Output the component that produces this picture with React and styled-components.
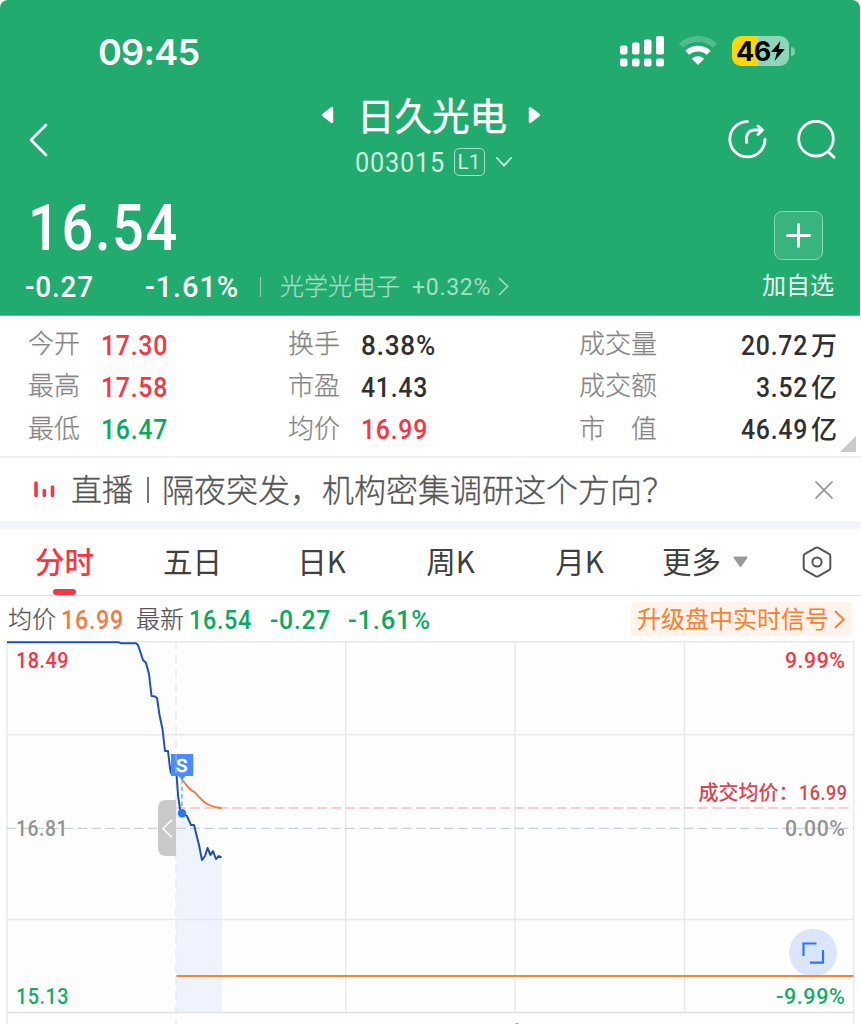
import styled, { createGlobalStyle } from "styled-components";

const stats = [
  [
    { label: "今开", value: "17.30", w: 67, color: "#fa3440" },
    { label: "最高", value: "17.58", w: 67, color: "#fa3440" },
    { label: "最低", value: "16.47", w: 67, color: "#07ab5f" },
  ],
  [
    { label: "换手", value: "8.38%", w: 75, color: "#303030" },
    { label: "市盈", value: "41.43", w: 67, color: "#303030" },
    { label: "均价", value: "16.99", w: 67, color: "#fa3440" },
  ],
  [
    { label: "成交量", value: "20.72", w: 67, unit: "万" },
    { label: "成交额", value: "3.52", w: 52, unit: "亿" },
    { label: "市　值", value: "46.49", w: 67, unit: "亿" },
  ],
];

// digits drawn in a narrow face: text is stretched to the given width
function Num({ children, w, size, color = "#fff", weight = 500 }) {
  const h = Math.round(size * 1.2);
  return (
    <NumSvg width={w} height={h}>
      <text
        x="0"
        y={Math.round(h / 2 + size * 0.356)}
        fontSize={size}
        fontWeight={weight}
        fill={color}
        letterSpacing={size * 0.03}
        textLength={w}
        lengthAdjust="spacingAndGlyphs"
      >
        {children}
      </text>
    </NumSvg>
  );
}

function StatusBar() {
  return (
    <SStatusBar>
      <Clock>09:45</Clock>
      <StatusIcons>
        <svg width="44" height="31" viewBox="0 0 44 31" fill="#fff">
          <rect x="0" y="9.5" width="7.5" height="9" rx="2" />
          <rect x="12" y="6.5" width="7.5" height="12" rx="2" />
          <rect x="24" y="3.5" width="7.5" height="15" rx="2" />
          <rect x="36" y="0" width="8" height="18.5" rx="2" />
          <rect x="0" y="22.5" width="7.5" height="8" rx="2" />
          <rect x="12" y="22.5" width="7.5" height="8" rx="2" />
          <rect x="24" y="22.5" width="7.5" height="8" rx="2" />
          <rect x="36" y="22.5" width="8" height="8" rx="2" />
        </svg>
        <svg width="40" height="30" viewBox="0 0 40 30">
          <path d="M3 9.6 A25 25 0 0 1 37 9.6" fill="none" stroke="#fff" strokeOpacity=".22" strokeWidth="6" />
          <path d="M9.2 16.8 A16 16 0 0 1 30.8 16.8" fill="none" stroke="#fff" strokeWidth="5.6" />
          <path d="M20 29 L13.8 22.8 A9 9 0 0 1 26.2 22.8 Z" fill="#fff" />
        </svg>
        <Battery>
          <BatteryText>46</BatteryText>
          <svg width="14" height="20" viewBox="0 0 14 20">
            <path d="M9.5 0 L0 11 H6 L3.6 20 L13.8 8 H7.6 Z" fill="#000" />
          </svg>
          <BatteryTip />
        </Battery>
      </StatusIcons>
    </SStatusBar>
  );
}

function Header() {
  return (
    <SHeader>
      <StatusBar />
      <NavRow>
        <svg width="20" height="34" viewBox="0 0 20 34">
          <path d="M17 2 L2 17 L17 32" fill="none" stroke="#fff" strokeWidth="2.8" strokeLinecap="round" strokeLinejoin="round" />
        </svg>
        <TitleBlock>
          <TitleLine>
            <svg width="13" height="18" viewBox="0 0 13 18">
              <path d="M11 2 V16 L2 9 Z" fill="#fff" stroke="#fff" strokeWidth="2.4" strokeLinejoin="round" />
            </svg>
            <Title>日久光电</Title>
            <svg width="13" height="18" viewBox="0 0 13 18">
              <path d="M2 2 V16 L11 9 Z" fill="#fff" stroke="#fff" strokeWidth="2.4" strokeLinejoin="round" />
            </svg>
          </TitleLine>
          <CodeLine>
            <Num w={90} size={28} weight={400} color="#d0eedf">003015</Num>
            <Level>L1</Level>
            <svg width="16" height="10" viewBox="0 0 16 10">
              <path d="M1 1 L8 8.6 L15 1" fill="none" stroke="#d0eedf" strokeWidth="1.8" strokeLinecap="round" strokeLinejoin="round" />
            </svg>
          </CodeLine>
        </TitleBlock>
        <NavIcons>
          <svg width="39" height="39" viewBox="0 0 39 39" fill="none" stroke="#fff" strokeWidth="2.8" strokeLinecap="round" strokeLinejoin="round">
            <path d="M19.5 1.7 A17.6 17.6 0 1 0 37 19.2" />
            <path d="M18.5 22.5 V19 Q18.5 10 27 10 H34 M30 6 L34.5 10 L30 14.5" />
          </svg>
          <svg width="39" height="39" viewBox="0 0 39 39" fill="none" stroke="#fff" strokeWidth="2.8" strokeLinecap="round">
            <circle cx="19" cy="18.7" r="17.3" />
            <path d="M31 31.5 L37 37.3" />
          </svg>
        </NavIcons>
      </NavRow>
      <PriceArea>
        <div>
          <BigPrice>
            <Num w={151} size={65}>16.54</Num>
          </BigPrice>
          <ChangeLine>
            <Num w={69} size={29}>-0.27</Num>
            <Num w={94} size={29}>-1.61%</Num>
            <Divider />
            <Sector>光学光电子</Sector>
            <Num w={79} size={24} weight={400} color="#a5ddc4">+0.32%</Num>
            <svg width="11" height="19" viewBox="0 0 11 19">
              <path d="M1 1 L9.6 9.5 L1 18" fill="none" stroke="#a5ddc4" strokeWidth="1.6" />
            </svg>
          </ChangeLine>
        </div>
        <Watch>
          <WatchBox>
            <svg width="25" height="25" viewBox="0 0 25 25">
              <path d="M12.5 1.5 V23.5 M1.5 12.5 H23.5" stroke="#fff" strokeWidth="2.8" strokeLinecap="round" />
            </svg>
          </WatchBox>
          加自选
        </Watch>
      </PriceArea>
    </SHeader>
  );
}

function Stats() {
  return (
    <SStats>
      {stats.map((column, i) => (
        <StatColumn key={i}>
          {column.map((item) => (
            <Stat key={item.label}>
              <StatLabel>{item.label}</StatLabel>
              <StatValue>
                <Num w={item.w} size={28} color={item.color || "#303030"}>{item.value}</Num>
                {item.unit && <Unit>{item.unit}</Unit>}
              </StatValue>
            </Stat>
          ))}
        </StatColumn>
      ))}
      <Corner />
    </SStats>
  );
}

function News() {
  return (
    <SNews>
      <svg width="21" height="17" viewBox="0 0 21 17" stroke="#fa3440" strokeWidth="3.6" strokeLinecap="round">
        <path d="M2 2 V14.5 M10.3 9.5 V14.5 M18.5 6 V14.5" />
      </svg>
      <Headline>
        <Tag>直播</Tag>
        <Bar />
        <span>隔夜突发，机构密集调研这个方向？</span>
      </Headline>
      <svg width="18" height="18" viewBox="0 0 18 18">
        <path d="M0.5 0.5 L17.5 17.5 M17.5 0.5 L0.5 17.5" stroke="#999" strokeWidth="1.8" />
      </svg>
    </SNews>
  );
}

function Tabs() {
  return (
    <STabs>
      <Tab $active>分时</Tab>
      <Tab>五日</Tab>
      <Tab>日K</Tab>
      <Tab>周K</Tab>
      <Tab>月K</Tab>
      <More>
        <MoreText>更多</MoreText>
        <svg width="15" height="12" viewBox="0 0 15 12">
          <path d="M1.5 1.5 H13.5 L7.5 10 Z" fill="#999" stroke="#999" strokeWidth="2" strokeLinejoin="round" />
        </svg>
      </More>
      <svg width="30" height="32" viewBox="0 0 30 32" fill="none" stroke="#555" strokeWidth="2">
        <path d="M13.5 1.8 Q15 1 16.5 1.8 L27 7.8 Q28.3 8.6 28.3 10.2 V21.8 Q28.3 23.4 27 24.2 L16.5 30.2 Q15 31 13.5 30.2 L3 24.2 Q1.7 23.4 1.7 21.8 V10.2 Q1.7 8.6 3 7.8 Z" />
        <circle cx="15" cy="16" r="4.6" />
      </svg>
    </STabs>
  );
}

function Legend() {
  return (
    <SLegend>
      <LegendText>均价</LegendText>
      <Num w={63} size={26} color="#f17c48">16.99</Num>
      <LegendText $left={12}>最新</LegendText>
      <Num w={63} size={26} color="#07ab5f">16.54</Num>
      <Gap $w={18} />
      <Num w={61} size={26} color="#07ab5f">-0.27</Num>
      <Gap $w={17} />
      <Num w={83} size={26} color="#07ab5f">-1.61%</Num>
      <Signal>
        <SignalText>升级盘中实时信号</SignalText>
        <svg width="11" height="19" viewBox="0 0 11 19">
          <path d="M1 1 L9.8 9.5 L1 18" fill="none" stroke="#fc7f2b" strokeWidth="2" />
        </svg>
      </Signal>
    </SLegend>
  );
}

const pricePoints =
  "176.5,774 178,795 180,809 182,813 187,816 191,825 194,825 199,845 202,860 205,856 207.5,848 210.5,855 213,851 216,859 219,856 221.5,857.5";

function Chart() {
  return (
    <SChart width="861" height="383" viewBox="0 641 861 383">
      <rect x="7" y="642" width="847" height="382" fill="#fdfdfd" />
      <polygon points={`176,1012 ${pricePoints} 222,858 222,1012`} fill="#eef3fe" />

      <g stroke="#e7e8e8" strokeWidth="1.4" fill="none">
        <path d="M7 641.8 H854 M7 734.7 H854 M7 919.5 H854" />
        <path d="M7 641 V1024 M345.7 641 V1012 M515 641 V1012 M684.5 641 V1012 M853.7 641 V1024" />
        <path d="M7 1012.5 H854" stroke="#dfe0e0" />
        <path d="M176 641 V1024" strokeDasharray="9 5" />
      </g>
      <path d="M7 828.4 H854" stroke="#c2d2de" strokeWidth="1.4" strokeDasharray="9.5 4.6" />
      <path d="M176 808 H852" stroke="#f9cdd2" strokeWidth="1.8" strokeDasharray="10 4.1" />
      <path d="M176.5 976 H853.5" stroke="#fb8434" strokeWidth="2" />

      <path d="M176 800 H166 Q158 800 158 809 V847 Q158 856 166 856 H176 Z" fill="#c9c9c9" />
      <path d="M172 820 L163 828.5 L172 837.5" fill="none" stroke="#fff" strokeWidth="1.6" />

      <polyline
        points="182.5,780 187,786 191,790 195,792.5 199,797 203,801 207,804 212,806 217,807.5 221.5,808"
        fill="none"
        stroke="#fb7437"
        strokeWidth="1.8"
      />
      <polyline
        points={`7,642.3 119,642.3 121,643.3 136,643.3 138,645 143,660 146,663 149,674 151.5,696 155,696.5 157,698 159.5,715 162.5,729 165,751 168,751 170,768 171,773 ${pricePoints}`}
        fill="none"
        stroke="#1c52b8"
        strokeWidth="2"
        strokeLinejoin="round"
      />

      <path d="M182 779 V810" stroke="#7fb0ff" strokeWidth="1.6" strokeDasharray="4.5 3" />
      <path d="M171 754 H193.3 V776 H185.5 L182 780 L178.5 776 H171 Z" fill="#4a8bff" />
      <path d="M176 754 V776" stroke="#86aff8" strokeWidth="1.4" strokeDasharray="7 5" />
      <ChartText x="176" y="772" fontSize="19" stroke="#fff" strokeWidth="0.4" fill="#fff">S</ChartText>
      <circle cx="182" cy="813.3" r="4.2" fill="#1f78ff" />

      <ChartText x="16" y="668" textLength="53" fill="#fa3440">18.49</ChartText>
      <ChartText x="16" y="836" textLength="52" fill="#949494">16.81</ChartText>
      <ChartText x="16" y="1003.5" textLength="53" fill="#12ad66">15.13</ChartText>
      <ChartText x="785" y="668" textLength="60.5" fill="#fa3440">9.99%</ChartText>
      <ChartText x="785" y="836" textLength="60.5" fill="#949494">0.00%</ChartText>
      <ChartText x="776" y="1003.5" textLength="69.5" fill="#12ad66">-9.99%</ChartText>
      <AvgLabel x="698.5" y="800">成交均价：</AvgLabel>
      <ChartText x="799" y="800" textLength="48.5" fontSize="20.5" fill="#dc4450">16.99</ChartText>

      <circle cx="813" cy="952.7" r="24" fill="#dbe6fd" />
      <path d="M789.5 976 H836.5" stroke="#fb8434" strokeWidth="2" />
      <path d="M803.5 956 V943.5 H816.5 M810 962.7 H823 V950" fill="none" stroke="#2878ff" strokeWidth="2.2" />
      <rect x="515.5" y="1023" width="3" height="1" fill="#aaa" />
    </SChart>
  );
}

function App() {
  return (
    <Page>
      <GlobalStyle />
      <Header />
      <Stats />
      <News />
      <Tabs />
      <Legend />
      <Chart />
    </Page>
  );
}

const GlobalStyle = createGlobalStyle`
  * {
    box-sizing: border-box;
  }

  body {
    margin: 0;
    background: #fff;
    overflow: hidden;
    font-family: "Noto Sans CJK SC", sans-serif;
  }

  svg {
    display: block;
    flex-shrink: 0;
  }
`;

const Page = styled.main`
  width: 861px;
  height: 1024px;
  overflow: hidden;
`;

const NumSvg = styled.svg`
  font-family: Roboto, sans-serif;
  overflow: visible;
`;

const SHeader = styled.header`
  height: 316px;
  margin-right: 1px;
  border-radius: 8px 8px 0 0;
  background: #21ab6f;
  border-bottom: 1px solid #5cc195;
  color: #fff;
`;

const SStatusBar = styled.div`
  display: flex;
  justify-content: space-between;
  align-items: center;
  height: 90px;
  padding: 12px 65px 0 98px;
`;

const Clock = styled.span`
  padding-top: 2px;
  font-family: Inter, sans-serif;
  font-size: 36px;
  font-weight: 600;
  letter-spacing: -0.7px;
`;

const StatusIcons = styled.div`
  display: flex;
  align-items: center;
  gap: 14px;
`;

const Battery = styled.div`
  position: relative;
  display: flex;
  align-items: center;
  width: 57px;
  height: 30px;
  margin: 0 6px 0 0;
  padding-left: 4px;
  border-radius: 9px;
  background: linear-gradient(90deg, #ffd60a 26px, #90d5b7 26px);
`;

const BatteryText = styled.span`
  font-family: Inter, sans-serif;
  font-size: 27px;
  font-weight: 700;
  letter-spacing: -0.5px;
  color: #000;
`;

const BatteryTip = styled.i`
  position: absolute;
  right: -6px;
  top: 11px;
  width: 4px;
  height: 9px;
  border-radius: 0 4px 4px 0;
  background: #79cca8;
`;

const NavRow = styled.div`
  display: flex;
  justify-content: space-between;
  align-items: center;
  height: 98px;
  padding: 1px 24px 0 29px;
`;

const TitleBlock = styled.div`
  width: 230px;
  margin-left: 88px;
  padding-bottom: 5px;
`;

const TitleLine = styled.div`
  display: flex;
  align-items: center;
  justify-content: center;
  height: 50px;
  padding-right: 3px;
  gap: 21px;
`;

const Title = styled.h1`
  margin: 0;
  padding: 0 0 2px 2px;
  font-size: 37.5px;
  font-weight: 400;
  line-height: 48px;
  -webkit-text-stroke: 0.5px #fff;
`;

const CodeLine = styled.div`
  display: flex;
  align-items: center;
  height: 44px;
  padding-left: 37px;
`;

const Level = styled.span`
  width: 31px;
  height: 28px;
  margin: 0 11px 0 9px;
  border: 1.5px solid #a8dec6;
  border-radius: 5px;
  font-family: Roboto, sans-serif;
  font-size: 21px;
  line-height: 26px;
  text-align: center;
  color: #d0eedf;
`;

const NavIcons = styled.div`
  display: flex;
  gap: 30px;
`;

const PriceArea = styled.div`
  display: flex;
  justify-content: space-between;
  height: 127px;
  padding: 0 26px 0 25px;
`;

const BigPrice = styled.div`
  height: 79px;
  padding: 0 0 0 3px;
`;

const ChangeLine = styled.div`
  display: flex;
  align-items: center;
  height: 39px;

  svg:nth-child(2) {
    margin-left: 51px;
  }
`;

const Divider = styled.i`
  width: 1px;
  height: 20px;
  margin: 0 19px 0 21px;
  background: #8ed2b3;
`;

const Sector = styled.span`
  margin-right: 12px;
  padding-bottom: 4px;
  font-size: 24px;
  font-weight: 300;
  color: #a5ddc4;
  -webkit-text-stroke: 0.25px #a5ddc4;

  & + svg + svg {
    margin-left: 7px;
  }
`;

const Watch = styled.div`
  display: flex;
  flex-direction: column;
  align-items: center;
  padding-top: 23px;
  font-size: 24px;
  line-height: 47px;
  color: #eefaf4;
`;

const WatchBox = styled.div`
  display: flex;
  align-items: center;
  justify-content: center;
  width: 49px;
  height: 49px;
  border: 1px solid #8fd3b5;
  border-radius: 8px;
  background: #38b47e;
`;

const SStats = styled.section`
  position: relative;
  display: grid;
  grid-template-columns: 260px 291px 258px;
  height: 142px;
  padding: 5px 0 0 28px;
  border-bottom: 2px solid #f1f1f1;
`;

const StatColumn = styled.div`
  display: flex;
  flex-direction: column;
`;

const Stat = styled.div`
  display: flex;
  align-items: center;
  height: 42.3px;
  gap: 21px;

  ${StatColumn}:nth-child(3) & {
    justify-content: space-between;
  }
`;

const StatLabel = styled.span`
  font-size: 26px;
  font-weight: 300;
  line-height: 40px;
  color: #858585;
  -webkit-text-stroke: 0.25px #858585;
`;

const StatValue = styled.span`
  display: flex;
  align-items: center;
  padding-top: 5px;
`;

const Unit = styled.span`
  margin-left: 3px;
  padding-bottom: 2px;
  font-size: 26px;
  font-weight: 500;
  line-height: 34px;
  color: #303030;
`;

const Corner = styled.i`
  position: absolute;
  right: 5px;
  bottom: 4px;
  border-left: 16px solid transparent;
  border-bottom: 16px solid #c9c9c9;
`;

const SNews = styled.section`
  display: flex;
  align-items: center;
  height: 71px;
  padding: 0 28px 0 34px;
  border-bottom: 8px solid #f2f4f9;
`;

const Headline = styled.div`
  display: flex;
  align-items: center;
  flex: 1;
  margin-left: 16px;
  padding-bottom: 3px;
  font-size: 32px;
  font-weight: 300;
  line-height: 58px;
  color: #555;
  -webkit-text-stroke: 0.3px #555;
`;

const Tag = styled.span`
  font-size: 31px;
`;

const Bar = styled.i`
  width: 2px;
  height: 26px;
  margin: 3px 13px 0 14px;
  background: #777;
`;

const STabs = styled.nav`
  display: flex;
  align-items: center;
  height: 67px;
  padding-right: 29px;
  border-bottom: 1px solid #e2e2e2;
`;

const Tab = styled.a`
  position: relative;
  width: 129px;
  height: 66px;
  padding-right: ${(p) => (p.$active ? 0 : 2)}px;
  font-size: 29.5px;
  font-weight: ${(p) => (p.$active ? 500 : 400)};
  line-height: 62px;
  text-align: center;
  color: ${(p) => (p.$active ? "#fa3440" : "#404040")};

  &::after {
    content: "";
    display: ${(p) => (p.$active ? "block" : "none")};
    position: absolute;
    left: 53px;
    bottom: 0;
    width: 23px;
    height: 6px;
    border-radius: 3px;
    background: #fa3440;
  }
`;

const More = styled.div`
  display: flex;
  align-items: center;
  flex: 1;
  gap: 12px;
  padding-left: 17px;
`;

const MoreText = styled.span`
  padding-bottom: 4px;
  font-size: 29.5px;
  color: #404040;
`;

const SLegend = styled.div`
  display: flex;
  align-items: center;
  height: 45px;
  padding: 1px 9px 0 8px;

  ${NumSvg} {
    margin-left: 5px;
  }
`;

const LegendText = styled.span`
  margin-left: ${(p) => p.$left || 0}px;
  padding-bottom: 4px;
  font-size: 24px;
  font-weight: 300;
  color: #555;
  -webkit-text-stroke: 0.25px #555;
`;

const Gap = styled.i`
  width: ${(p) => p.$w - 5}px;
`;

const Signal = styled.div`
  display: flex;
  align-items: center;
  gap: 5px;
  height: 34px;
  margin-left: auto;
  padding: 0 7px 0 6px;
  border-radius: 4px;
  background: #fff3eb;
`;

const SignalText = styled.span`
  padding-bottom: 4px;
  font-size: 24px;
  color: #fc7f2b;
`;

const SChart = styled.svg`
  font-size: 22.5px;
`;

const ChartText = styled.text.attrs({ lengthAdjust: "spacingAndGlyphs" })`
  font-family: Roboto, sans-serif;
  font-weight: 500;
  letter-spacing: 0.6px;
`;

const AvgLabel = styled.text`
  font-size: 20px;
  font-weight: 500;
  fill: #dc4450;
`;

export default App;
